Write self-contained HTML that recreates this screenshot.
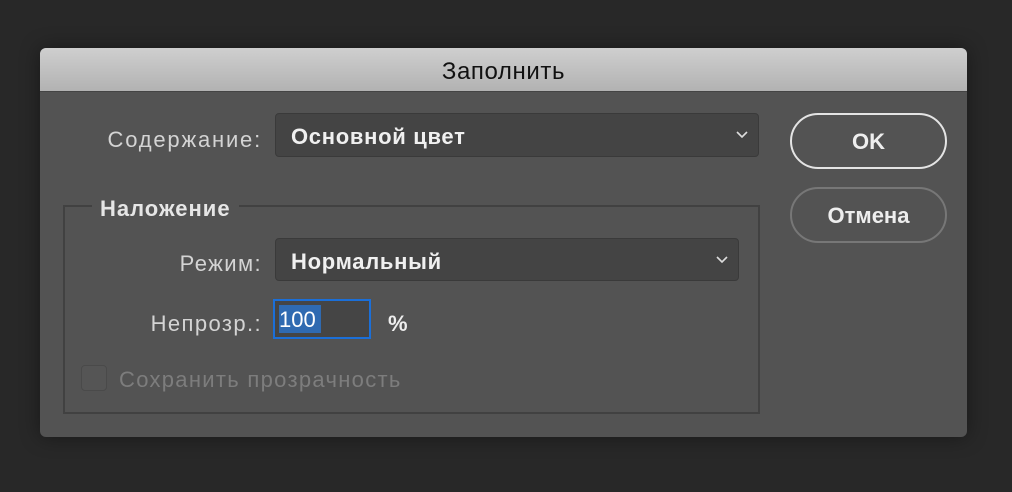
<!DOCTYPE html>
<html><head><meta charset="utf-8"><style>
body{margin:0;width:1012px;height:492px;background:#282828;font-family:"Liberation Sans",sans-serif;position:relative;overflow:hidden}
.dlg{position:absolute;left:40px;top:48px;width:927px;height:389px;background:#535353;border-radius:6px;overflow:hidden;box-shadow:0 0 20px rgba(0,0,0,.4)}
.title{height:43px;background:linear-gradient(#cfcfcf,#b2b2b2);border-bottom:1px solid #444;text-align:center;line-height:48px;font-size:24px;letter-spacing:.6px;color:#111}
.a{position:absolute;font-size:22px;letter-spacing:1.4px;color:#d4d4d4;white-space:nowrap}
.sel{position:absolute;background:#444;border:1px solid #3a3a3a;border-radius:4px;box-sizing:border-box;color:#f0f0f0;font-size:22px;font-weight:bold;letter-spacing:.7px;padding-left:15px}
.sel svg{position:absolute;right:10px;top:50%;margin-top:-4px}
.grp{position:absolute;left:23px;top:157px;width:697px;height:209px;border:2px solid #414141;box-sizing:border-box}
.btn{position:absolute;left:750px;width:157px;height:56px;box-sizing:border-box;border-radius:28px;text-align:center;font-size:22px;font-weight:bold;color:#eee;line-height:54px}
</style></head><body>
<div class="dlg">
<div class="title">Заполнить</div>
<div class="a" style="right:705px;top:79px;letter-spacing:1.8px">Содержание:</div>
<div class="sel" style="left:235px;top:65px;width:484px;height:44px;line-height:46px">Основной цвет<svg width="12" height="8"><path d="M1 1L6 6L11 1" stroke="#ddd" stroke-width="1.6" fill="none"/></svg></div>
<div class="grp"></div>
<div class="a" style="left:52px;top:148px;background:#535353;padding:0 8px;color:#e6e6e6;font-weight:bold;letter-spacing:1px">Наложение</div>
<div class="a" style="right:705px;top:203px">Режим:</div>
<div class="sel" style="left:235px;top:190px;width:464px;height:43px;line-height:45px">Нормальный<svg width="12" height="8"><path d="M1 1L6 6L11 1" stroke="#ddd" stroke-width="1.6" fill="none"/></svg></div>
<div class="a" style="right:705px;top:263px">Непрозр.:</div>
<div style="position:absolute;left:233px;top:251px;width:98px;height:40px;border:2px solid #1b6fd8;box-sizing:border-box;background:#454545"><span style="position:absolute;left:4px;top:4px;height:28px;width:42px;background:#2f6ab1;color:#fff;font-size:22px;line-height:30px">100</span></div>
<div class="a" style="left:348px;top:263px;color:#eee;font-weight:bold">%</div>
<div style="position:absolute;left:41px;top:317px;width:26px;height:26px;border:1px solid #4a4a4a;border-radius:4px;background:#555;box-sizing:border-box"></div>
<div class="a" style="left:79px;top:319px;color:#7d7d7d;letter-spacing:1.3px">Сохранить прозрачность</div>
<div class="btn" style="top:65px;border:2px solid #e4e4e4">OK</div>
<div class="btn" style="top:139px;border:2px solid #777">Отмена</div>
</div>
</body></html>
